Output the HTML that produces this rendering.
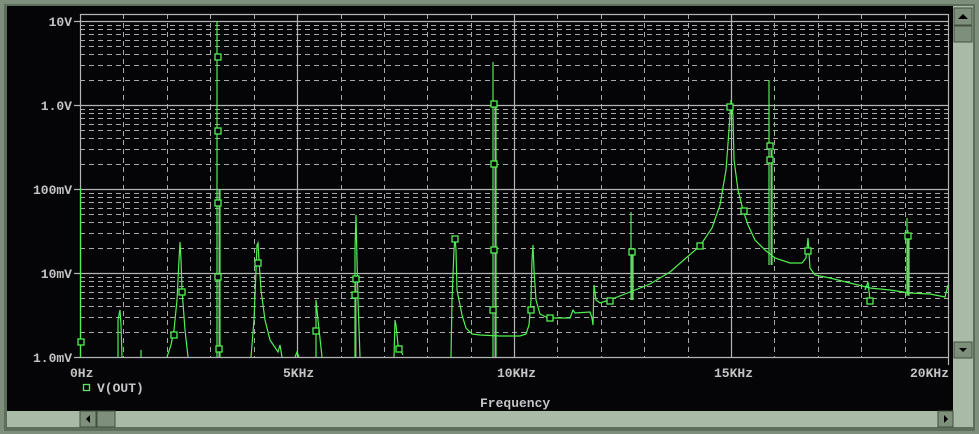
<!DOCTYPE html>
<html><head><meta charset="utf-8"><style>
html,body{margin:0;padding:0;width:979px;height:434px;overflow:hidden;background:#7e907c}
svg{display:block}
text{font-family:"Liberation Mono","DejaVu Sans Mono",monospace;font-weight:bold;fill:#c4c4c4;font-size:13px}
</style></head><body>
<svg width="979" height="434" viewBox="0 0 979 434">
<rect x="0" y="0" width="979" height="434" fill="#7e907c"/>
<rect x="4" y="4" width="971" height="427" fill="#5d6e5c"/>
<rect x="7" y="6" width="946" height="405" fill="#050508"/>
<rect x="953" y="6" width="20" height="421" fill="#a9bba7"/>
<rect x="954" y="8" width="18" height="17" fill="#7e907c" stroke="#44503f"/>
<path d="M958 19 L963 14 L968 19Z" fill="#000"/>
<rect x="954" y="26" width="18" height="16" fill="#7e907c" stroke="#44503f"/>
<rect x="954" y="342" width="18" height="16" fill="#7e907c" stroke="#44503f"/>
<path d="M959 348 L963 352 L967 348Z" fill="#000"/>
<rect x="7" y="411" width="946" height="16" fill="#a9bba7"/>
<rect x="80" y="411" width="16" height="16" fill="#7e907c" stroke="#44503f"/>
<path d="M90 415 L86 419 L90 423Z" fill="#000"/>
<rect x="97" y="411" width="18" height="16" fill="#7e907c" stroke="#44503f"/>
<rect x="938" y="411" width="15" height="16" fill="#7e907c" stroke="#44503f"/>
<path d="M944 415 L948 419 L944 423Z" fill="#000"/>
<g stroke="#a8a8a8" stroke-width="1" stroke-dasharray="5,4" fill="none">
<path d="M80 332.5H948M80 317.5H948M80 306.5H948M80 298.5H948M80 292.5H948M80 286.5H948M80 281.5H948M80 277.5H948
M80 248.5H948M80 233.5H948M80 222.5H948M80 214.5H948M80 208.5H948M80 202.5H948M80 197.5H948M80 193.5H948
M80 164.5H948M80 149.5H948M80 138.5H948M80 130.5H948M80 124.5H948M80 118.5H948M80 113.5H948M80 109.5H948
M80 80.5H948M80 65.5H948M80 54.5H948M80 46.5H948M80 40.5H948M80 34.5H948M80 29.5H948M80 25.5H948"/>
<path d="M123.5 14V357M167.5 14V357M210.5 14V357M254.5 14V357M341.5 14V357M384.5 14V357M427.5 14V357M471.5 14V357M557.5 14V357M601.5 14V357M644.5 14V357M688.5 14V357M774.5 14V357M818.5 14V357M861.5 14V357M905.5 14V357"/>
</g>
<g stroke="#b4b4b4" stroke-width="1.2" fill="none">
<path d="M80 21.5H948M80 105.5H948M80 189.5H948M80 273.5H948M80 357.5H948M80 14.5H948"/>
<path d="M80.5 14V357M297.5 14V357M514.5 14V357M731.5 14V357M948.5 14V365"/>
<path d="M74 21.5H80M74 105.5H80M74 189.5H80M74 273.5H80M74 357.5H80"/>
</g>
<text x="72" y="26" text-anchor="end">10V</text>
<text x="72" y="110" text-anchor="end">1.0V</text>
<text x="72" y="194" text-anchor="end">100mV</text>
<text x="72" y="278" text-anchor="end">10mV</text>
<text x="72" y="362" text-anchor="end">1.0mV</text>
<text x="70" y="377">0Hz</text>
<text x="283" y="377">5KHz</text>
<text x="497" y="377">10KHz</text>
<text x="714" y="377">15KHz</text>
<text x="910" y="377">20KHz</text>
<text x="97" y="392">V(OUT)</text>
<text x="480" y="407">Frequency</text>
<rect x="83.5" y="384.5" width="6" height="6" fill="none" stroke="#50f050" stroke-width="1.3"/>
<g stroke="#a0a0a0" stroke-width="1" fill="none">
<path d="M219 190V357M495 104V357M771 150V265M356 280V357M632 250V300M908 230V295"/>
</g>
<g stroke="#50f050" stroke-width="1.2" fill="none">
<path d="M80.5 188V357"/>
<path d="M118 357V320L120 310L121 325L122 357M141 357V350"/>
<path d="M167 357L171 345L174 330L177 300L179 260L180 242L181 260L182 290L185 330L188 357"/>
<path d="M217 357V21M220 357V190"/>
<path d="M251 357L254 320L256 270L257 245L258 243L259 260L261 290L265 320L270 340L278 352L280 345L282 357"/>
<path d="M295 357L297 352L299 357"/>
<path d="M316 357V300L317 310L318 320L322 357"/>
<path d="M355 357V250L356 215L357 260L358 300L360 357"/>
<path d="M394 357L395 320L396 325L398 345L403 355"/>
<path d="M451 357L452 300L454 250L455 237L456 250L457 290L459 300L462 315L466 328L472 334L480 335L500 336L520 336L526 334L529 325L531 300L532 260L533 245L534 270L536 300L540 314L548 318L570 318L573 310L575 313L590 312L592 318L593 325L594 285L596 300L600 303L612 299L630 292L650 284L670 272L686 258L700 246L712 228L720 205L726 170L729 130L731 100L733 115L734 160L738 190L743 210L748 225L755 240L765 250L775 258L790 263L802 263L806 258L808 238L810 268L815 275L830 278L850 283L870 288L890 290L910 293L930 294L945 297L948 285"/>
<path d="M493 357V62M496 357V104"/>
<path d="M769 265V80M772 265V150"/>
<path d="M631 300V212M633 300V250"/>
<path d="M907 296V218M909 296V236"/>
<path d="M865 290L868 282L870 300"/>
</g>
<g stroke="#50f050" stroke-width="1.3" fill="#050508">
<rect x="78" y="339" width="6" height="6"/>
<rect x="171" y="332" width="6" height="6"/>
<rect x="179" y="289" width="6" height="6"/>
<rect x="215" y="54" width="6" height="6"/>
<rect x="215" y="128" width="6" height="6"/>
<rect x="215" y="200" width="6" height="6"/>
<rect x="215" y="274" width="6" height="6"/>
<rect x="216" y="346" width="6" height="6"/>
<rect x="255" y="260" width="6" height="6"/>
<rect x="313" y="328" width="6" height="6"/>
<rect x="353" y="276" width="6" height="6"/>
<rect x="352" y="292" width="6" height="6"/>
<rect x="396" y="346" width="6" height="6"/>
<rect x="452" y="236" width="6" height="6"/>
<rect x="491" y="101" width="6" height="6"/>
<rect x="491" y="161" width="6" height="6"/>
<rect x="491" y="247" width="6" height="6"/>
<rect x="490" y="307" width="6" height="6"/>
<rect x="528" y="307" width="6" height="6"/>
<rect x="547" y="315" width="6" height="6"/>
<rect x="607" y="298" width="6" height="6"/>
<rect x="629" y="249" width="6" height="6"/>
<rect x="697" y="243" width="6" height="6"/>
<rect x="727" y="104" width="6" height="6"/>
<rect x="741" y="208" width="6" height="6"/>
<rect x="767" y="143" width="6" height="6"/>
<rect x="767" y="157" width="6" height="6"/>
<rect x="805" y="248" width="6" height="6"/>
<rect x="867" y="298" width="6" height="6"/>
<rect x="905" y="233" width="6" height="6"/>
</g>
</svg>
</body></html>
